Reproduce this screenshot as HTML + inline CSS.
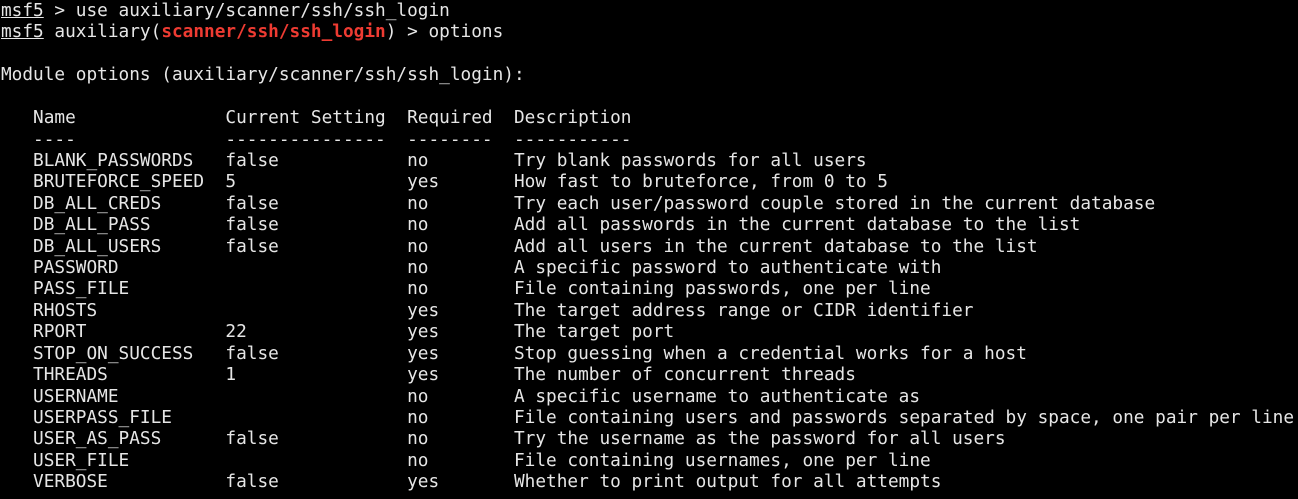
<!DOCTYPE html>
<html><head><meta charset="utf-8"><style>
html,body{margin:0;padding:0;background:#000;width:1298px;height:499px;overflow:hidden}
pre{margin:0;padding:0 0 0 1px;font-family:"DejaVu Sans Mono","Liberation Mono",monospace;font-size:17.75px;line-height:21.42px;color:#e6e6e6;position:relative;top:1px}
u{text-decoration:underline}
.r{color:#ee3b32;font-weight:bold}
</style></head><body><pre><u>msf5</u> &gt; use auxiliary/scanner/ssh/ssh_login
<u>msf5</u> auxiliary(<span class="r">scanner/ssh/ssh_login</span>) &gt; options

Module options (auxiliary/scanner/ssh/ssh_login):

   Name              Current Setting  Required  Description
   ----              ---------------  --------  -----------
   BLANK_PASSWORDS   false            no        Try blank passwords for all users
   BRUTEFORCE_SPEED  5                yes       How fast to bruteforce, from 0 to 5
   DB_ALL_CREDS      false            no        Try each user/password couple stored in the current database
   DB_ALL_PASS       false            no        Add all passwords in the current database to the list
   DB_ALL_USERS      false            no        Add all users in the current database to the list
   PASSWORD                           no        A specific password to authenticate with
   PASS_FILE                          no        File containing passwords, one per line
   RHOSTS                             yes       The target address range or CIDR identifier
   RPORT             22               yes       The target port
   STOP_ON_SUCCESS   false            yes       Stop guessing when a credential works for a host
   THREADS           1                yes       The number of concurrent threads
   USERNAME                           no        A specific username to authenticate as
   USERPASS_FILE                      no        File containing users and passwords separated by space, one pair per line
   USER_AS_PASS      false            no        Try the username as the password for all users
   USER_FILE                          no        File containing usernames, one per line
   VERBOSE           false            yes       Whether to print output for all attempts
</pre></body></html>
